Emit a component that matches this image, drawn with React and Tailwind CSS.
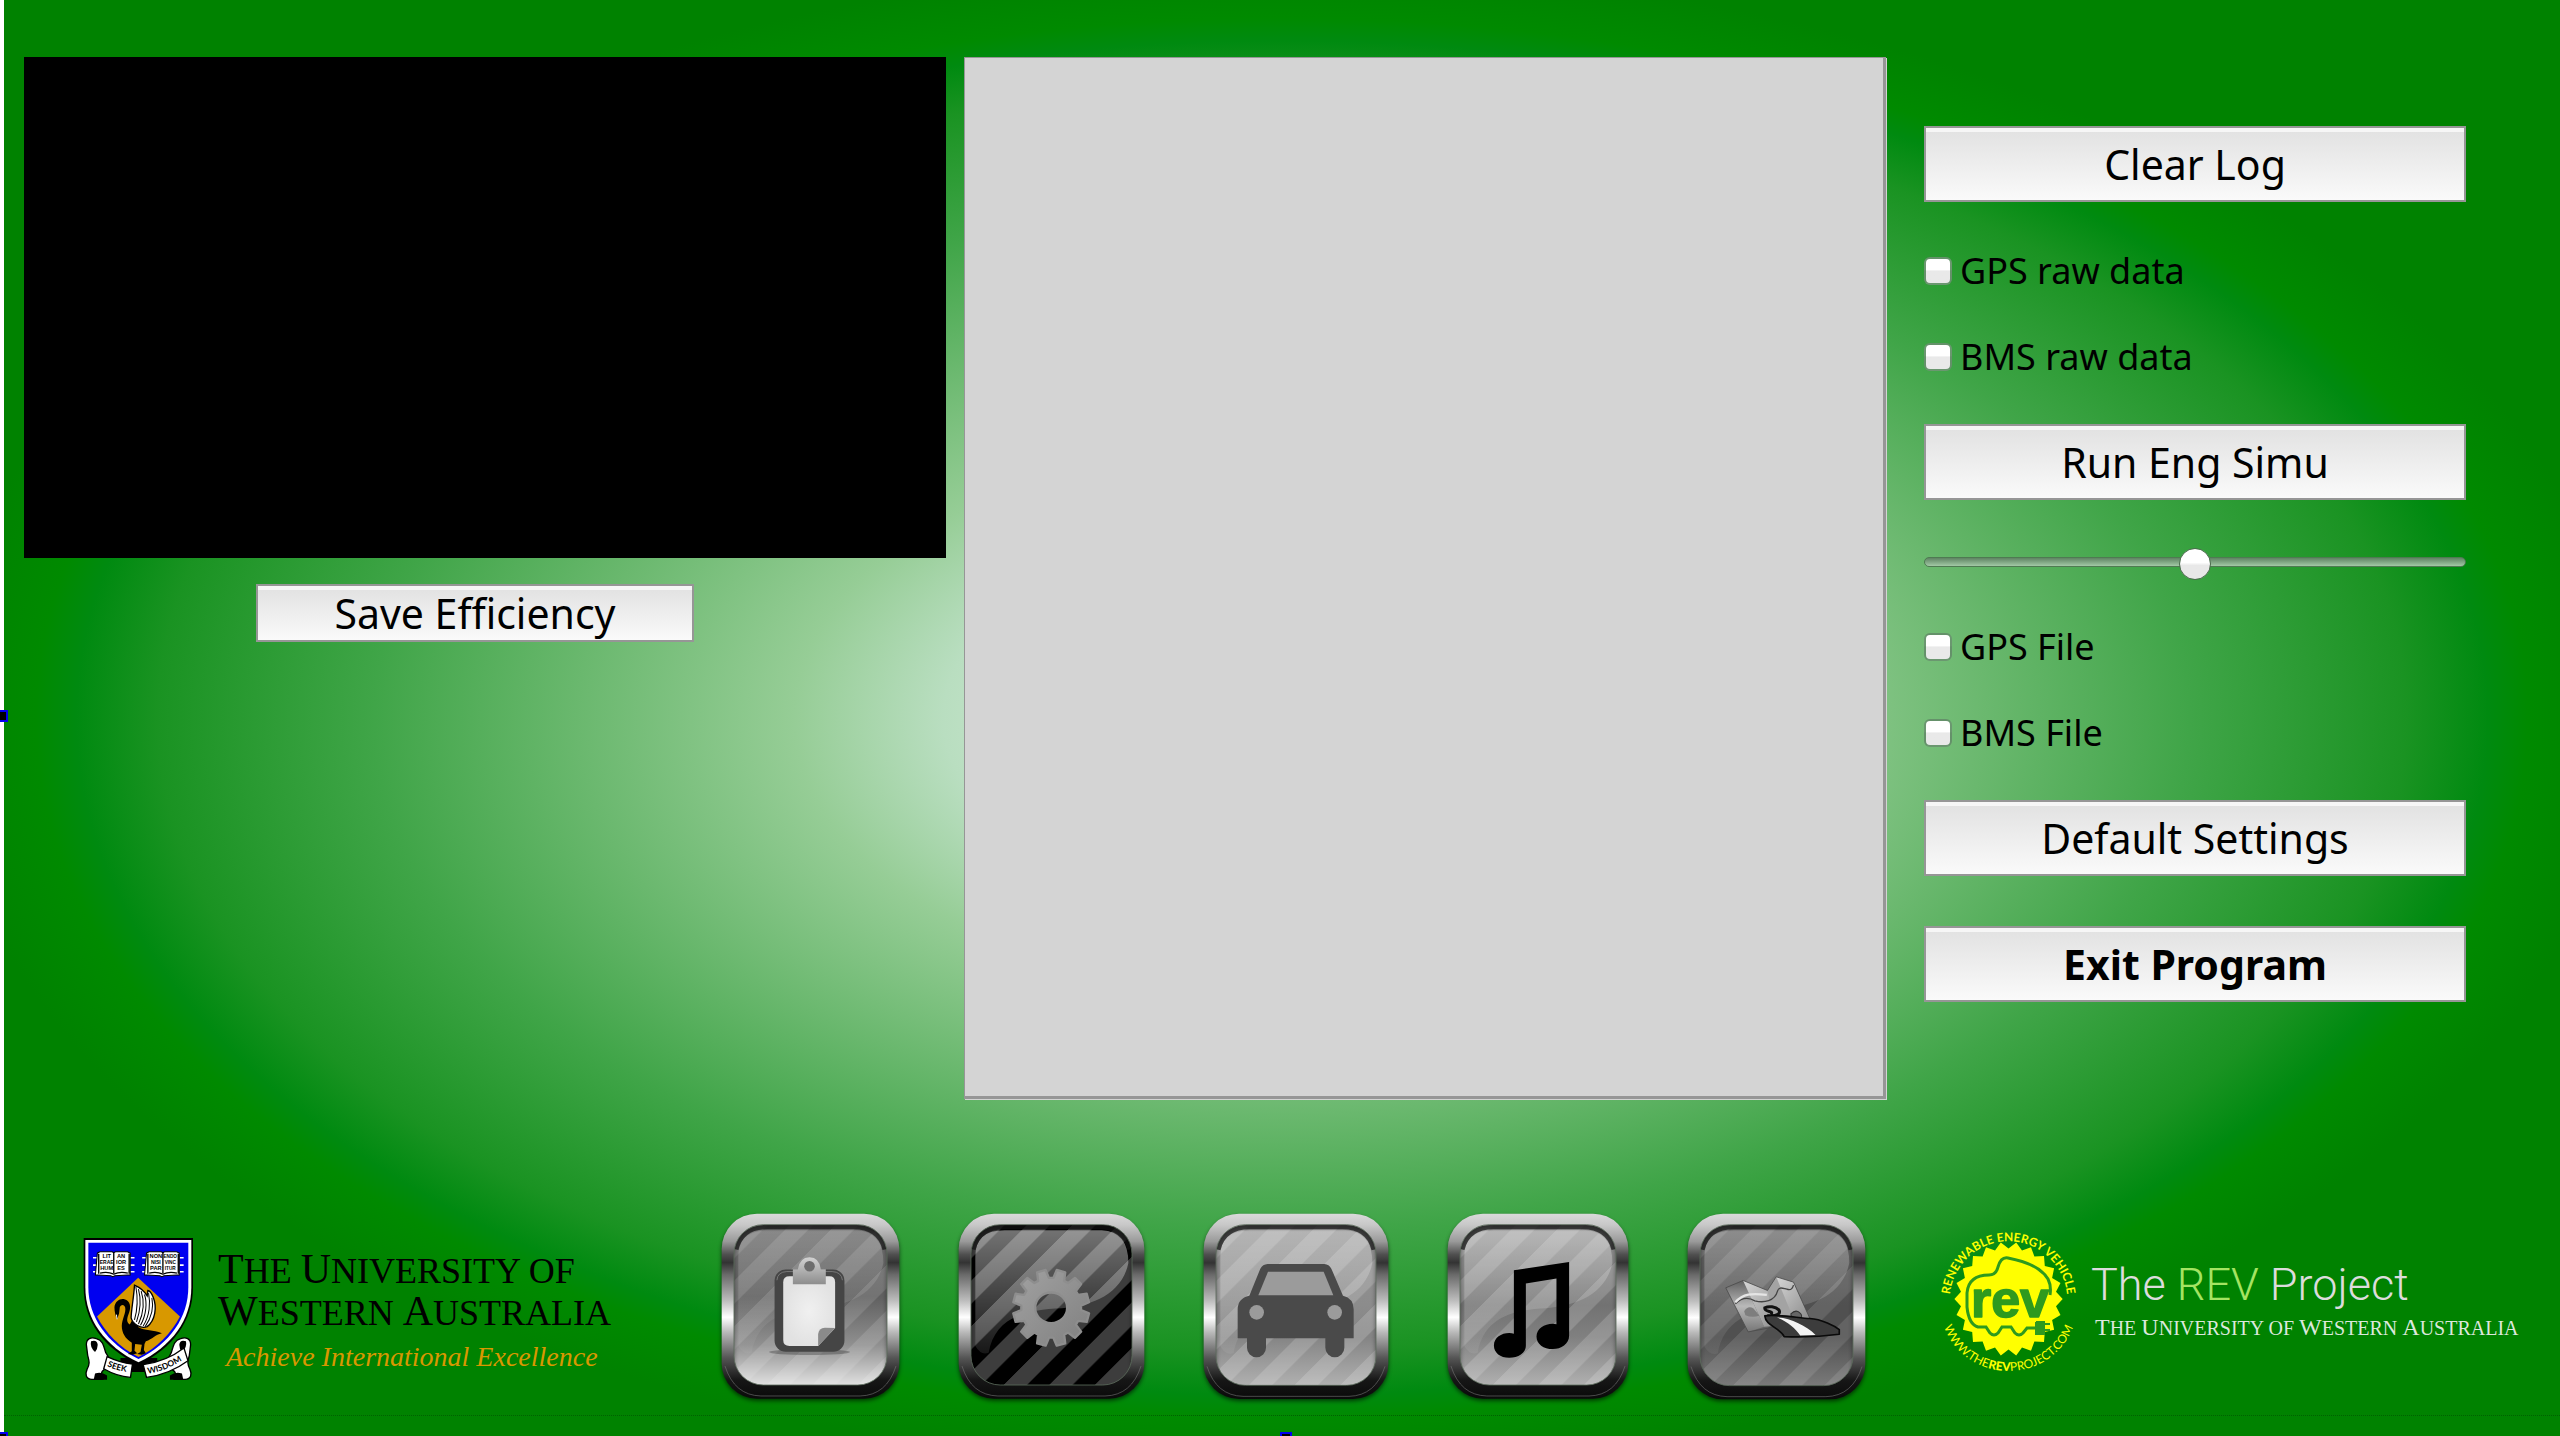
import { useId, useState } from "react";

const UI_FONT = "font-['Noto_Sans','Open_Sans',sans-serif]";
const SERIF = "font-['Liberation_Serif',serif]";

function PushButton({ children, className = "" }) {
  return (
    <button
      type="button"
      className={`flex w-full items-center justify-center border-2 border-[#969696] bg-linear-to-b from-[#e1e1e1] to-[#fafafa] text-[41px] leading-none text-black shadow-[inset_0_4px_0_#f6f6f6] ${className}`}
    >
      {children}
    </button>
  );
}

function Check({ label }) {
  const id = useId();
  return (
    <div className="flex h-12 items-center gap-2">
      <input
        id={id}
        type="checkbox"
        className="size-7 shrink-0 appearance-none rounded-md border-2 border-[#2c6b33]/70 bg-linear-to-b from-white from-45% to-[#e9e9e9] to-50% checked:to-[#7fb2e8]"
      />
      <label htmlFor={id} className="text-4xl leading-none text-black">
        {label}
      </label>
    </div>
  );
}

/* Chrome-framed square tile; children are drawn in the tile's own space. */
function Tile({ label, w, x0, base, stripe, gloss, className, children }) {
  const k = useId().replace(/[^a-zA-Z0-9]/g, "");
  const innerW = w - 78;
  return (
    <button type="button" aria-label={label} className={className}>
      <svg viewBox={`0 0 ${w} 564`} className="block h-auto w-full overflow-visible">
        <defs>
          <linearGradient id={`${k}f`} x1="0" y1="0" x2="0" y2="1">
            <stop offset="0" stopColor="#dadada" />
            <stop offset=".06" stopColor="#c8c8c8" />
            <stop offset=".15" stopColor="#9a9a9a" />
            <stop offset=".22" stopColor="#505050" />
            <stop offset=".265" stopColor="#333333" />
            <stop offset=".33" stopColor="#6a6a6a" />
            <stop offset=".47" stopColor="#bdbdbd" />
            <stop offset=".56" stopColor="#ffffff" />
            <stop offset=".64" stopColor="#bababa" />
            <stop offset=".78" stopColor="#555555" />
            <stop offset=".9" stopColor="#161616" />
            <stop offset="1" stopColor="#0a0a0a" />
          </linearGradient>
          <linearGradient id={`${k}b`} x1="0" y1="0" x2="0" y2="1">
            {base.map(([o, c]) => (
              <stop key={o} offset={o} stopColor={c} />
            ))}
          </linearGradient>
          <linearGradient id={`${k}g`} x1="0" y1="0" x2="0" y2="1">
            <stop offset="0" stopColor="#fff" stopOpacity={gloss} />
            <stop offset="1" stopColor="#fff" stopOpacity={gloss / 5} />
          </linearGradient>
          <pattern id={`${k}p`} width="137" height="600" patternUnits="userSpaceOnUse" patternTransform="translate(106 0) skewX(-45)">
            <rect width="70" height="600" fill="#fff" fillOpacity={stripe} />
          </pattern>
          <clipPath id={`${k}c`}>
            <rect x="39" y="35" width={innerW} height="482" rx="88" />
          </clipPath>
          <filter id={`${k}s`} x="-10%" y="-10%" width="120%" height="120%">
            <feGaussianBlur stdDeviation="6" />
          </filter>
        </defs>
        <rect x="2" y="10" width={w - 4} height="554" rx="106" fill="#000" opacity=".6" filter={`url(#${k}s)`} />
        <rect x="2" y="2" width={w - 4} height="556" rx="106" fill={`url(#${k}f)`} />
        <path d={`M12 460 Q40 548 120 550 H${w - 120} Q${w - 40} 548 ${w - 12} 460`} fill="none" stroke="#777" strokeWidth="2.5" opacity=".7" />
        <g clipPath={`url(#${k}c)`}>
          <rect x="39" y="35" width={innerW} height="482" fill={`url(#${k}b)`} />
          <rect x="39" y="35" width={innerW} height="482" fill={`url(#${k}p)`} />
          <path
            d={`M52 400 V130 Q52 52 140 52 H${w - 130} Q${w - 50} 56 ${w - 50} 150 C${w - 70} 250 ${w - 170} 280 ${w - 250} 286 C190 290 110 320 92 420 Q70 430 52 400Z`}
            fill={`url(#${k}g)`}
          />
          <rect x="34" y="37" width={innerW + 10} height="520" rx="88" fill="none" stroke="#000" strokeWidth="12" opacity=".45" filter={`url(#${k}s)`} />
          <path d={`M46 110 Q62 42 140 42 H${w - 140} Q${w - 62} 42 ${w - 46} 110`} fill="none" stroke="#111" strokeWidth="13" opacity=".7" />
        </g>
        <rect x="39" y="35" width={innerW} height="482" rx="88" fill="none" stroke="#5c6b5c" strokeWidth="2.5" />
        <g transform={`translate(${-x0} -36)`}>{children}</g>
      </svg>
    </button>
  );
}

function gearPath(cx, cy, teeth, outer, root) {
  const pts = [];
  const step = (Math.PI * 2) / teeth;
  for (let i = 0; i < teeth; i++) {
    const a = i * step + step / 2;
    for (const [r, o] of [[root, -0.36], [outer, -0.22], [outer, 0.22], [root, 0.36]]) {
      pts.push(`${(cx + r * Math.cos(a + o * step)).toFixed(1)} ${(cy + r * Math.sin(a + o * step)).toFixed(1)}`);
    }
  }
  return `M${pts.join("L")}Z`;
}

function ClipboardArt() {
  return (
    <>
      <defs>
        <linearGradient id="clipMetal" x1="0" y1="0" x2="0" y2="1">
          <stop offset="0" stopColor="#d2d2d2" />
          <stop offset="1" stopColor="#8d8d8d" />
        </linearGradient>
        <radialGradient id="clipPaper">
          <stop offset="0" stopColor="#f0f0f0" />
          <stop offset="1" stopColor="#e2e2e2" />
        </radialGradient>
      </defs>
      <ellipse cx="328" cy="454" rx="122" ry="9" fill="#000" opacity=".25" />
      <rect x="223" y="206" width="210" height="247" rx="34" fill="#454545" />
      <path d="M230 238 Q232 213 260 212 H396 Q424 213 427 238" fill="none" stroke="#777" strokeWidth="3" />
      <path d="M268 226 H388 Q405 226 405 244 V382 L354 436 H268 Q249 436 249 418 V244 Q249 226 268 226Z" fill="url(#clipPaper)" />
      <path d="M405 382 L354 436 V400 Q356 382 374 381Z" fill="#8a8a8a" />
      <path d="M278 205 H293 Q298 170 328 169 Q358 170 362 205 H377 V250 H278Z" fill="url(#clipMetal)" />
      <circle cx="328" cy="196" r="16" fill="#6d6d6d" />
    </>
  );
}

function GearArt() {
  return (
    <>
      <defs>
        <linearGradient id="gearFill" x1="0" y1="0" x2="1" y2="1">
          <stop offset="0" stopColor="#a2a2a2" />
          <stop offset="1" stopColor="#808080" />
        </linearGradient>
      </defs>
      <path
        fillRule="evenodd"
        stroke="#8e8e8e"
        strokeWidth="7"
        strokeLinejoin="round"
        fill="url(#gearFill)"
        d={`${gearPath(1050, 321, 12, 115, 90)}M1002 321a48 46 0 1 0 96 0a48 46 0 1 0-96 0Z`}
      />
    </>
  );
}

function CarArt() {
  return (
    <>
      <path
        fill="#4a4a4a"
        fillRule="evenodd"
        d="M258 189H428Q442 190 449 203L484 284Q516 292 516 325V412H488V440A28 28 0 0 1 431 440V412H253V440A28 28 0 0 1 196 440V412H168V325Q168 292 203 284L236 203Q243 190 258 189Z"
      />
      <path fill="#9b9b9b" d="M259 212H426L455 283H230Z" />
      <circle cx="225" cy="334" r="22" fill="#9b9b9b" />
      <circle cx="459" cy="334" r="22" fill="#9b9b9b" />
    </>
  );
}

function NoteArt() {
  return (
    <path d="M991 208L1157 183V405C1157 430 1133 445 1108 445C1080 445 1059 430 1059 407C1059 384 1082 369 1108 369Q1114 369 1119 370V233L1027 248V434C1027 457 1004 471 977 471C950 471 931 456 931 434C931 411 953 397 977 397Q985 397 991 399Z" />
  );
}

function MapArt() {
  return (
    <>
      <defs>
        <linearGradient id="mapLight" x1="0" y1="0" x2="1" y2="1">
          <stop offset="0" stopColor="#d6d6d6" />
          <stop offset="1" stopColor="#8c8c8c" />
        </linearGradient>
        <linearGradient id="mapDark" x1="0" y1="0" x2="0" y2="1">
          <stop offset="0" stopColor="#5f5f5f" />
          <stop offset=".5" stopColor="#b9b9b9" />
          <stop offset="1" stopColor="#777" />
        </linearGradient>
      </defs>
      <path d="M203 260L255 238L318 377L270 392Z" fill="url(#mapDark)" />
      <path d="M255 238L328 268L372 372L318 377Z" fill="url(#mapLight)" />
      <path d="M328 268L354 227L420 352L350 372Z" fill="#a3a3a3" />
      <path d="M354 227L406 243L455 352L405 350Z" fill="url(#mapLight)" />
      <path d="M203 260L255 238L328 268L354 227L406 243L455 352M203 260L270 392L345 378" fill="none" stroke="#4a4a4a" strokeWidth="2.5" />
      <path d="M232 308C255 285 275 290 290 299C318 306 350 300 358 270C362 255 375 262 386 264C400 270 404 258 406 252" fill="none" stroke="#444" strokeWidth="4" />
      <path d="M232 303C255 277 280 276 326 281" fill="none" stroke="#e5e5e5" strokeWidth="7" />
      <path d="M258 330Q270 312 286 322L304 344Q280 350 262 342Z" fill="#7e7e7e" />
      <path d="M398 338Q412 324 424 334Q434 342 428 350H400Z" fill="#666" stroke="#333" strokeWidth="3" />
      <path d="M330 344C360 346 368 336 362 326C352 316 332 314 320 320C318 332 345 330 340 336" fill="none" stroke="#111" strokeWidth="9" strokeLinecap="round" />
      <path d="M320 344C350 338 420 350 455 352C490 354 530 375 543 385V399C490 406 430 408 378 406C366 380 322 374 320 344Z" fill="#3c3c3c" stroke="#0a0a0a" strokeWidth="5" strokeLinejoin="round" />
      <path d="M356 349C396 350 444 374 472 401L426 403C412 382 388 360 356 349Z" fill="#f4f4f4" />
    </>
  );
}

function Crest() {
  const ribbon = "fill-white stroke-black";
  return (
    <svg viewBox="40 30 332 432" className="block w-[111px] shrink-0" role="img" aria-label="University crest">
      <path d="M152 392H262V426L232 434H180L152 420Z" fill="#000" />
      <path d="M42 33H369V180C369 280 310 362 206 412C100 362 42 280 42 180Z" fill="#000" />
      <path d="M47 39H364V180C364 278 306 356 206 405C106 356 47 278 47 180Z" fill="#fff" />
      <path d="M56 47H355V180C355 270 300 348 206 395C112 348 56 270 56 180Z" fill="#0000f0" />
      <path d="M205 152L330 268C304 318 262 362 206 389C150 362 108 318 82 268Z" fill="#d89800" />
      {[83, 230].map((x, n) => (
        <g key={x}>
          <path
            d={`M${x - 13} 92h12M${x - 13} 114h12M${x - 13} 134h12M${x + 99} 92h12M${x + 99} 114h12M${x + 99} 134h12`}
            stroke="#fff"
            strokeWidth="5"
          />
          <path d={`M${x} 78l8-4h36l5 3 5-3h36l8 4v66h-8l-38 2-6 3-6-3-38-2h-8Z`} fill="#fff" stroke="#000" strokeWidth="3" />
          <path d={`M${x + 4} 80V140M${x + 95} 80V140`} stroke="#000" strokeWidth="4" />
          <path d={`M${x + 49} 77V138M${x + 8} 138Q${x + 30} 132 ${x + 49} 141Q${x + 68} 132 ${x + 91} 138`} fill="none" stroke="#000" strokeWidth="4" />
          <g fontSize="17" fontWeight="700" textAnchor="middle" className="font-['Liberation_Sans',sans-serif]">
            {(n ? ["NON", "NISI", "PAR"] : ["LIT", "ERAE", "HUM"]).map((t, i) => (
              <text key={t} x={x + 28} y={92 + i * 18} fontSize={t.length > 3 ? 15 : 17}>{t}</text>
            ))}
            {(n ? ["ENDO", "VINC", "ITUR"] : ["AN", "IOR", "ES"]).map((t, i) => (
              <text key={t} x={x + 71} y={92 + i * 18} fontSize={t.length > 3 ? 14 : 17}>{t}</text>
            ))}
          </g>
        </g>
      ))}
      <path
        d="M134 240C136 222 150 213 164 216C182 221 184 240 178 256C172 272 168 284 180 292L196 262L206 300C226 312 250 306 276 318C256 322 248 336 228 342L224 350L222 368L228 378L216 382L202 380L212 374L216 352L196 350L194 370L202 378L188 382L174 380L186 372L186 346C166 334 156 316 156 296C156 276 170 256 166 240C162 230 154 232 150 240L148 258L142 276C138 268 134 254 134 240Z"
        fill="#000"
      />
      <path d="M194 174C192 210 184 250 184 272C188 290 214 306 232 298C256 280 262 240 250 210C244 196 238 190 234 190L232 206C222 190 208 180 194 174Z" fill="#fff" stroke="#000" strokeWidth="4" />
      <path
        d="M198 178C204 210 202 250 194 278M206 186C214 216 212 250 200 284M214 192C224 222 222 256 206 290M224 202C232 226 230 262 212 294M236 198C242 226 240 266 220 296M246 212C252 240 244 272 226 298"
        fill="none"
        stroke="#000"
        strokeWidth="3"
      />
      <path d="M140 262l2 14" stroke="#fff" strokeWidth="3" />
      <g strokeWidth="4" strokeLinejoin="round">
        <path className={ribbon} d="M50 352C50 334 64 328 80 334C98 340 100 348 108 376L118 392L104 426C92 434 92 444 100 456H66C48 454 46 440 52 426C62 408 58 400 54 384Z" />
        <path className={ribbon} d="M362 352C362 334 348 328 332 334C314 340 312 348 304 376L296 392L306 426C320 434 320 444 312 456H346C364 454 366 440 360 426C350 408 354 400 358 384Z" />
      </g>
      <path d="M64 342Q82 336 84 352Q84 364 76 374Q60 360 64 342ZM348 342Q330 336 328 352Q328 364 336 374Q352 360 348 342Z" fill="#000" />
      <path d="M76 438Q96 432 112 444V457H72ZM336 438Q316 432 300 444V457H340Z" fill="#000" />
      <path className={ribbon} strokeWidth="4" d="M112 388Q150 406 188 410L182 450Q140 446 102 424Z" />
      <path className={ribbon} strokeWidth="4" d="M220 412Q290 402 342 362L354 400Q300 440 230 450Z" />
      <path id="seekLine" d="M112 416Q144 432 190 436" fill="none" />
      <path id="wisdomLine" d="M234 439Q296 430 356 386" fill="none" />
      <g fontSize="25" fontWeight="700" className="font-['Lato',sans-serif]">
        <text><textPath href="#seekLine">SEEK</textPath></text>
        <text><textPath href="#wisdomLine">WISDOM</textPath></text>
      </g>
    </svg>
  );
}

function burst(cx, cy, n, r1, r2) {
  const pts = [];
  for (let i = 0; i < n * 2; i++) {
    const a = (Math.PI * i) / n;
    const r = i % 2 ? r2 : r1;
    pts.push(`${(cx + r * 0.95 * Math.cos(a)).toFixed(1)},${(cy + r * Math.sin(a)).toFixed(1)}`);
  }
  return pts.join(" ");
}

function RevBadge() {
  return (
    <svg viewBox="4 2 148 156" className="block w-[148px] shrink-0 overflow-visible" role="img" aria-label="REV Project badge">
      <defs>
        <path id="arcTop" d="M19 90A59 60 0 1 1 136 90" />
        <path id="arcBottom" d="M9 86A68.500 66 0 0 0 146 86" />
      </defs>
      <polygon points={burst(77.5, 80, 22, 57, 50.5)} fill="#ffff00" />
      <path
        d="M119 76C120 70 120 66 117 60C111 50 98 43 77 39C72 38 69 41 67 48Q65 56 58 56C44 56 37 62 36 74V88C37 98 40 106 47 108L55 108L59 114Q63 118 67 114L71 108H80L84 114Q88 118 92 114L96 109H107"
        fill="none"
        stroke="#2e9a1e"
        strokeWidth="3"
      />
      <path d="M105 103H113V105H119M113 111H119M105 103V115H113V103" fill="#2e9a1e" stroke="#2e9a1e" strokeWidth="2" />
      <text x="79" y="98" fontSize="52" fontWeight="700" textAnchor="middle" fill="#2e9a1e" stroke="#2e9a1e" strokeWidth="1.500" strokeLinejoin="round" className="font-['Liberation_Sans',sans-serif]">
        rev
      </text>
      <text fontSize="12" fontWeight="700" fill="#ffff00" className="font-['Lato',sans-serif]">
        <textPath href="#arcTop" startOffset="50%" textAnchor="middle">RENEWABLE ENERGY VEHICLE</textPath>
      </text>
      <text fontSize="12" fill="#ffff00" className="font-['Lato',sans-serif]">
        <textPath href="#arcBottom" startOffset="50%" textAnchor="middle">
          WWW.THE<tspan fontWeight="900">REV</tspan>PROJECT.COM
        </textPath>
      </text>
    </svg>
  );
}

function Caps({ words, big }) {
  return words.map((w, i) => (
    <span key={w}>
      {i > 0 && " "}
      {w === "OF" ? w : (<><span className={big}>{w[0]}</span>{w.slice(1)}</>)}
    </span>
  ));
}

function Handle({ className }) {
  return <span aria-hidden="true" className={`absolute size-3 border-2 border-[#0000f0] bg-black ${className}`} />;
}

export default function App() {
  const [level, setLevel] = useState(50);
  return (
    <div className={`relative flex min-h-screen overflow-hidden ${UI_FONT}`}>
      <div className="w-1 shrink-0 bg-white" />
      <main className="flex min-w-0 flex-1 flex-col bg-[radial-gradient(ellipse_53%_53%_at_50%_50%,#e6f4e8_0%,#b9dec0_25%,#96cd96_36%,#6ab86e_52%,#40a548_67%,#1a9322_83%,#008a10_89%,#008a00_92%,#008200_99%)]">
        <div className="flex flex-1 pt-[57px] pr-[94px] pl-5">
          <div className="grid flex-1 grid-cols-2 gap-[18px]">
            <section aria-label="Efficiency" className="flex flex-col items-center">
              <div className="aspect-[922/501] w-full bg-black" />
              <div className="mt-[26px] mr-[20px] w-[438px]">
                <PushButton className="h-[58px]">Save Efficiency</PushButton>
              </div>
            </section>
            <textarea
              aria-label="Log"
              readOnly
              className="block size-full resize-none border border-[#969696] bg-[#d4d4d4] shadow-[inset_-2px_-2px_0_#969696,1px_1px_0_#d4d4d4] outline-none"
            />
          </div>
          <section aria-label="Controls" className="ml-[38px] w-[542px] shrink-0 pt-[69px]">
            <PushButton className="h-[76px]">Clear Log</PushButton>
            <div className="mt-[45px] mb-[43px] flex flex-col gap-[38px]">
              <Check label="GPS raw data" />
              <Check label="BMS raw data" />
            </div>
            <PushButton className="h-[76px]">Run Eng Simu</PushButton>
            <input
              type="range"
              aria-label="Engine simulation level"
              value={level}
              onChange={(e) => setLevel(Number(e.target.value))}
              className="mt-[46px] block h-8 w-full appearance-none bg-transparent [&::-webkit-slider-runnable-track]:h-[10px] [&::-webkit-slider-runnable-track]:rounded-full [&::-webkit-slider-runnable-track]:border [&::-webkit-slider-runnable-track]:border-[#4f7a52] [&::-webkit-slider-runnable-track]:bg-linear-to-b [&::-webkit-slider-runnable-track]:from-[#5f8463] [&::-webkit-slider-runnable-track]:to-[#a3c9a6] [&::-webkit-slider-thumb]:-mt-2.5 [&::-webkit-slider-thumb]:size-[32px] [&::-webkit-slider-thumb]:appearance-none [&::-webkit-slider-thumb]:rounded-full [&::-webkit-slider-thumb]:border [&::-webkit-slider-thumb]:border-[#4a6b4c] [&::-webkit-slider-thumb]:bg-linear-to-b [&::-webkit-slider-thumb]:from-white [&::-webkit-slider-thumb]:from-45% [&::-webkit-slider-thumb]:to-[#e8e8e8] [&::-webkit-slider-thumb]:to-55%"
            />
            <div className="mt-[45px] mb-[43px] flex flex-col gap-[38px]">
              <Check label="GPS File" />
              <Check label="BMS File" />
            </div>
            <PushButton className="h-[76px]">Default Settings</PushButton>
            <PushButton className="mt-[50px] h-[76px] font-bold">Exit Program</PushButton>
          </section>
        </div>

        <footer className="mb-5 flex items-start border-b border-dotted border-[#006000] pt-[114px] pb-[14px]">
          <div className="flex w-[637px] shrink-0 items-start pt-6 pl-[79px]">
            <Crest />
            <div className={`ml-6 ${SERIF} text-[36px] leading-10 whitespace-nowrap text-black`}>
              <div className="pt-3"><Caps words={["THE", "UNIVERSITY", "OF"]} big="text-[42px]" /></div>
              <div><Caps words={["WESTERN", "AUSTRALIA"]} big="text-[42px]" /></div>
              <div className="pt-1 pl-2 text-[28px] text-[#d89800] italic">Achieve International Excellence</div>
            </div>
          </div>
          <nav aria-label="Screens" className="ml-20 flex shrink-0 gap-[58px]">
            <Tile label="Status" className="w-[179px]" w={538} x0={62} stripe={0.12} gloss={0.18}
              base={[[0, "#707070"], [0.45, "#606060"], [0.75, "#909090"], [1, "#e0e0e0"]]}><ClipboardArt /></Tile>
            <Tile label="Settings" className="w-[187px]" w={562} x0={770} stripe={0.24} gloss={0.45}
              base={[[0, "#000000"], [1, "#000000"]]}><GearArt /></Tile>
            <Tile label="Vehicle" className="w-[186px]" w={558} x0={64} stripe={0.16} gloss={0.3}
              base={[[0, "#949494"], [0.5, "#8c8c8c"], [0.7, "#848484"], [1, "#b0b0b0"]]}><CarArt /></Tile>
            <Tile label="Music" className="w-[182px]" w={547} x0={790} stripe={0.16} gloss={0.3}
              base={[[0, "#989898"], [0.5, "#727272"], [0.7, "#808080"], [1, "#b0b0b0"]]}><NoteArt /></Tile>
            <Tile label="Maps" className="w-[179px]" w={536} x0={87} stripe={0.11} gloss={0.26}
              base={[[0, "#666666"], [0.5, "#505050"], [0.7, "#505050"], [1, "#7a7a7a"]]}><MapArt /></Tile>
          </nav>
          <div className="ml-[69px] flex items-start whitespace-nowrap">
            <div className="pt-2"><RevBadge /></div>
            <div className="pt-11 pl-2">
              <div className="font-['Roboto',sans-serif] text-[45px] leading-[56px] font-light text-[#dcdcdc]">
                The <span className="text-[#a4e462]">REV</span> Project
              </div>
              <div className={`pl-1 ${SERIF} text-[20px] leading-7 text-[#dce8dc]`}>
                <Caps words={["THE", "UNIVERSITY", "OF", "WESTERN", "AUSTRALIA"]} big="text-2xl leading-7" />
              </div>
            </div>
          </div>
        </footer>
      </main>
      <Handle className="top-[710px] -left-1" />
      <Handle className="-bottom-2 -left-1" />
      <Handle className="-bottom-2 left-1/2" />
    </div>
  );
}
